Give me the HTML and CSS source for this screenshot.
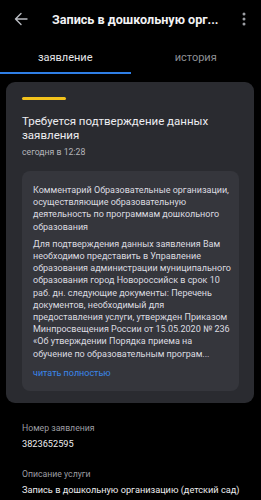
FILE: index.html
```html
<!DOCTYPE html>
<html lang="ru">
<head>
<meta charset="utf-8">
<title>Запись в дошкольную организацию</title>
<link rel="stylesheet" href="styles.css">
</head>
<body>
<header class="appbar">
  <svg class="back" viewBox="0 0 14 14" width="14" height="14" aria-hidden="true">
    <path d="M13 7H1.5M7 1.5L1.5 7L7 12.5" fill="none" stroke="#b9bcc2" stroke-width="1.4" stroke-linecap="round" stroke-linejoin="round"/>
  </svg>
  <h1 class="title">Запись в дошкольную орг...</h1>
  <svg class="more" viewBox="0 0 4 14" width="4" height="14" aria-hidden="true">
    <circle cx="2" cy="2" r="1.5" fill="#9c9ea3"/>
    <circle cx="2" cy="7" r="1.5" fill="#9c9ea3"/>
    <circle cx="2" cy="12" r="1.5" fill="#9c9ea3"/>
  </svg>
</header>
<nav class="tabs">
  <div class="tab tab-active">заявление</div>
  <div class="tab">история</div>
</nav>
<main>
  <section class="card">
    <div class="status-bar"></div>
    <h2 class="card-title">Требуется подтверждение данных заявления</h2>
    <div class="date">сегодня в 12:28</div>
    <div class="comment">
      <p class="para">Комментарий Образовательные организации, осуществляющие образовательную деятельность по программам дошкольного образования</p>
      <p class="para para-next">Для подтверждения данных заявления Вам необходимо представить в Управление образования администрации муниципального образования город Новороссийск в срок 10 раб. дн. следующие документы: Перечень документов, необходимый для предоставления услуги, утвержден Приказом Минпросвещения России от 15.05.2020 № 236 «Об утверждении Порядка приема на <span class="clamp-tail">обучение по образовательным програм...</span></p>
      <a class="readmore" href="#">читать полностью</a>
    </div>
  </section>
  <dl class="details">
    <dt class="label">Номер заявления</dt>
    <dd class="value">3823652595</dd>
    <dt class="label label-next">Описание услуги</dt>
    <dd class="value">Запись в дошкольную организацию (детский сад)</dd>
  </dl>
</main>
</body>
</html>
```
FILE: styles.css
```css
html, body {
  margin: 0;
  padding: 0;
  background: #000;
}
body {
  width: 261px;
  height: 500px;
  overflow: hidden;
  font-family: Roboto, "Noto Sans", sans-serif;
  color: #ececee;
}
.appbar {
  height: 38px;
  display: flex;
  align-items: center;
  padding: 0 15px 0 14px;
}
.back {
  flex: none;
  margin-right: 24px;
}
.title {
  flex: 1;
  margin: 0;
  font-size: 12.6px;
  font-weight: 700;
  white-space: nowrap;
  overflow: hidden;
  color: #f2f2f4;
}
.more {
  flex: none;
}
.tabs {
  display: flex;
  height: 36px;
}
.tab {
  flex: 1;
  box-sizing: border-box;
  display: flex;
  align-items: center;
  justify-content: center;
  padding-top: 4px;
  border-bottom: 2px solid transparent;
  font-size: 11px;
  color: #8e9096;
}
.tab-active {
  color: #e6e6e8;
  border-bottom-color: #2f7fe6;
}
.card {
  margin: 8px 7px 0 6px;
  background: #2a2b30;
  border-radius: 9px;
  padding: 15px 15px 12px 16px;
}
.status-bar {
  width: 44px;
  height: 3px;
  border-radius: 2px;
  background: #f2c21b;
}
.card-title {
  margin: 14px 0 0;
  font-size: 11.5px;
  line-height: 14px;
  font-weight: 400;
  color: #ededf0;
}
.date {
  margin-top: 5px;
  font-size: 8.7px;
  line-height: 11px;
  color: #b4b5ba;
}
.comment {
  margin-top: 13px;
  background: #35363c;
  border-radius: 8px;
  padding: 13px 5px 12px 11px;
  font-size: 9px;
  line-height: 12.2px;
  color: #dcdce0;
}
.para {
  margin: 0;
}
.para-next {
  margin-top: 5px;
}
.clamp-tail {
  display: block;
}
.readmore {
  display: block;
  margin-top: 7px;
  font-size: 9px;
  line-height: 12px;
  color: #3a86ea;
  text-decoration: none;
}
.details {
  margin: 19px 0 0;
  padding: 0 4px 0 22px;
}
.label {
  font-size: 8.7px;
  line-height: 12px;
  color: #9c9da2;
}
.label-next {
  margin-top: 18px;
}
.value {
  margin: 4px 0 0;
  font-size: 9.2px;
  line-height: 12px;
  color: #ececee;
  white-space: nowrap;
}
```
